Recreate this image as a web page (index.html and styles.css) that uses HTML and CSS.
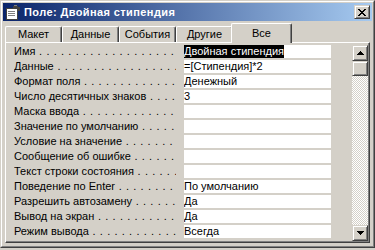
FILE: index.html
```html
<!doctype html>
<html lang="ru">
  <head>
    <meta charset="utf-8">
    <title>Поле: Двойная стипендия</title>
    <link rel="stylesheet" href="styles.css">
  </head>
  <body>
    <div class="window">
      <div class="frame">
        <div class="titlebar">
          <svg class="app-icon" width="16" height="16" viewBox="0 0 16 16" shape-rendering="crispEdges">
            <rect x="1" y="4" width="11" height="11" fill="#fff" stroke="#404040" stroke-width="1"/>
            <rect x="3" y="7" width="7" height="1" fill="#808080"/>
            <rect x="3" y="9" width="7" height="1" fill="#808080"/>
            <rect x="3" y="11" width="7" height="1" fill="#808080"/>
            <path d="M8 2h5v1h2v4h-2v-1h-1v-1h-4z" fill="#404040"/>
            <path d="M9 1h3v1h-3z" fill="#808080"/>
          </svg>
          <span class="title">Поле: Двойная стипендия</span>
          <span class="close-btn">
            <svg width="8" height="7" viewBox="0 0 8 7" shape-rendering="crispEdges">
              <path d="M0 0h2v1h1v1h2v-1h1v-1h2v1h-1v1h-1v1h-1v1h1v1h1v1h1v1h-2v-1h-1v-1h-2v1h-1v1h-2v-1h1v-1h1v-1h1v-1h-1v-1h-1v-1h-1z" fill="#000"/>
            </svg>
          </span>
        </div>

        <div class="tabs">
          <div class="tab">Макет</div>
          <div class="tab">Данные</div>
          <div class="tab">События</div>
          <div class="tab">Другие</div>
          <div class="tab tab-active">Все</div>
        </div>

        <div class="sheet">
          <div class="props">
            <div class="row"><div class="label">Имя</div><div class="value"><span class="selected">Двойная стипендия</span></div></div>
            <div class="row"><div class="label">Данные</div><div class="value">=[Стипендия]*2</div></div>
            <div class="row"><div class="label">Формат поля</div><div class="value">Денежный</div></div>
            <div class="row"><div class="label">Число десятичных знаков</div><div class="value">3</div></div>
            <div class="row"><div class="label">Маска ввода</div><div class="value"></div></div>
            <div class="row"><div class="label">Значение по умолчанию</div><div class="value"></div></div>
            <div class="row"><div class="label">Условие на значение</div><div class="value"></div></div>
            <div class="row"><div class="label">Сообщение об ошибке</div><div class="value"></div></div>
            <div class="row"><div class="label">Текст строки состояния</div><div class="value"></div></div>
            <div class="row"><div class="label">Поведение по Enter</div><div class="value">По умолчанию</div></div>
            <div class="row"><div class="label">Разрешить автозамену</div><div class="value">Да</div></div>
            <div class="row"><div class="label">Вывод на экран</div><div class="value">Да</div></div>
            <div class="row"><div class="label">Режим вывода</div><div class="value">Всегда</div></div>
          </div>

          <div class="scrollbar">
            <div class="sb-btn">
              <svg width="7" height="4" viewBox="0 0 7 4" shape-rendering="crispEdges"><path d="M3 0h1v1h1v1h1v1h1v1H0V3h1V2h1V1h1z" fill="#000"/></svg>
            </div>
            <div class="sb-thumb"></div>
            <div class="sb-track"></div>
            <div class="sb-btn">
              <svg width="7" height="4" viewBox="0 0 7 4" shape-rendering="crispEdges"><path d="M0 0h7v1h-1v1h-1v1h-1v1H3V3H2V2H1V1H0z" fill="#000"/></svg>
            </div>
          </div>
        </div>
      </div>
    </div>
  </body>
</html>
```

FILE: styles.css
```css
body {
  margin: 0;
  background: #d4d0c8;
  font-family: "Liberation Sans", "DejaVu Sans", sans-serif;
  font-size: 11px;
  color: #000;
}

/* classic raised window frame */
.window {
  width: 375px;
  height: 248px;
  box-sizing: border-box;
  border: 1px solid;
  border-color: #d4d0c8 #404040 #404040 #d4d0c8;
}

.frame {
  height: 100%;
  box-sizing: border-box;
  border: 1px solid;
  border-color: #fff #808080 #808080 #fff;
  padding: 1px;
  display: flex;
  flex-direction: column;
}

.titlebar {
  height: 18px;
  flex-shrink: 0;
  display: flex;
  align-items: center;
  padding: 0 2px;
  background: linear-gradient(to right, #0a246a, #a6caf0);
  color: #fff;
  font-weight: bold;
}

.app-icon { margin-right: 3px; flex-shrink: 0; }
.title { flex: 1; white-space: nowrap; letter-spacing: 0.4px; }

.close-btn {
  width: 16px;
  height: 14px;
  box-sizing: border-box;
  background: #d4d0c8;
  border: 1px solid;
  border-color: #d4d0c8 #404040 #404040 #d4d0c8;
  box-shadow: inset 1px 1px #fff, inset -1px -1px #808080;
  display: flex;
  align-items: center;
  justify-content: center;
}

/* tabs */
.tabs {
  height: 21px;
  flex-shrink: 0;
  display: flex;
  align-items: flex-end;
  padding-left: 2px;
}

.tab {
  width: 57px;
  height: 16px;
  box-sizing: border-box;
  border: 1px solid #fff;
  border-right-color: #404040;
  border-bottom: none;
  border-radius: 2px 2px 0 0;
  box-shadow: inset -1px 0 #808080;
  text-align: center;
  line-height: 14px;
  white-space: nowrap;
}

.tab-active {
  position: relative;
  z-index: 1;
  width: 61px;
  height: 20px;
  margin: 0 -2px -1px -2px;
  padding-top: 2px;
  background: #d4d0c8;
}

/* property sheet */
.sheet {
  flex: 1;
  margin: 0 2px 2px 2px;
  border: 1px solid;
  border-color: #fff #404040 #404040 #fff;
  box-shadow: inset -1px -1px #808080;
  padding: 2px 1px 1px 8px;
  display: flex;
}

.props {
  flex: 1;
  display: flex;
  flex-direction: column;
  gap: 2px;
}

.row {
  display: flex;
  height: 13px;
  line-height: 13px;
}

.label {
  width: 162px;
  margin-right: 8px;
  overflow: hidden;
  white-space: nowrap;
}

.label::after {
  content: " . . . . . . . . . . . . . . . . . . . . . . . . . . . . . .";
  letter-spacing: 0.6px;
}

.value {
  width: 147px;
  background: #fff;
  white-space: nowrap;
  overflow: hidden;
}

.selected {
  display: inline-block;
  background: #000;
  color: #fff;
}

/* scrollbar */
.scrollbar {
  width: 16px;
  display: flex;
  flex-direction: column;
}

.sb-btn, .sb-thumb {
  height: 16px;
  box-sizing: border-box;
  flex-shrink: 0;
  background: #d4d0c8;
  border: 1px solid;
  border-color: #d4d0c8 #404040 #404040 #d4d0c8;
  box-shadow: inset 1px 1px #fff, inset -1px -1px #808080;
  display: flex;
  align-items: center;
  justify-content: center;
}

.sb-thumb { height: 15px; }

.sb-track {
  flex: 1;
  background: repeating-conic-gradient(#fff 0 25%, #d4d0c8 0 50%) 0 0 / 2px 2px;
}
```
